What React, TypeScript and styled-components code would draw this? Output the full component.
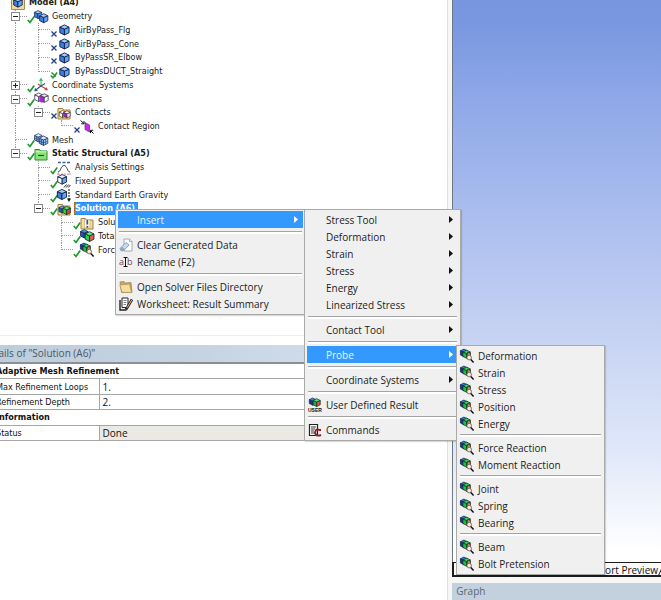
import React from "react";
import styled, { createGlobalStyle, css } from "styled-components";

const treeFont = '"DejaVu Sans Condensed", "DejaVu Sans", sans-serif';
const menuFont = '"Open Sans", "Noto Sans", sans-serif';

const GlobalStyle = createGlobalStyle`
  * { box-sizing: border-box; }
  body { margin: 0; background: #fff; overflow: hidden; }
  button { margin: 0; padding: 0; border: 0; background: none; color: inherit; font: inherit; text-align: left; }
  svg { display: block; flex: none; }
`;

/* ---------- icons ---------- */

const Glyph = styled.svg.attrs({ viewBox: "0 0 14 14", "aria-hidden": true })`
  width: 14px;
  height: 14px;
  overflow: visible;
`;

type CubeProps = { x?: number; y?: number; s?: number; left?: string; right?: string; top?: string; edge?: string };
const CubeShape = ({ x = 0, y = 0, s = 1, left = "#3d7fe0", right = "#5fa6f5", top = "#9fcbff", edge = "#12204a" }: CubeProps) => (
  <g transform={`translate(${x} ${y}) scale(${s})`} stroke={edge} strokeWidth={1} strokeLinejoin="round">
    <path d="M2 4 L7 6 V12.5 L2 10 Z" fill={left} />
    <path d="M12 4 L7 6 V12.5 L12 10 Z" fill={right} />
    <path d="M2 4 L7 1.5 L12 4 L7 6 Z" fill={top} />
  </g>
);

const Folder = ({ fill = "#f6dc9a", edge = "#9c8046" }: { fill?: string; edge?: string }) => (
  <path d="M1 2.5 H5.5 L6.5 4 H13 V13 H1 Z" fill={fill} stroke={edge} strokeWidth={1} />
);

const Loupe = () => (
  <g>
    <path d="M7.5 3.5 L10.5 4.5 V8 H7.5 Z" fill="#c98a74" stroke="#3a2620" strokeWidth="0.6" />
    <circle cx="9.2" cy="8.6" r="2.3" fill="#f7e6df" stroke="#6f625e" strokeWidth="0.9" />
    <path d="M10.8 10.4 L13.6 13.4" stroke="#111" strokeWidth="1.5" />
  </g>
);

const ModelIcon = () => (
  <Glyph>
    <path d="M0.5 0.5 H13.5 V13.5 H0.5 Z" fill="#f4d99d" stroke="#a58a55" />
    <CubeShape x={1} y={0.5} s={0.85} />
  </Glyph>
);
const GeometryIcon = () => (
  <Glyph>
    <CubeShape x={-1} y={-0.5} s={0.72} />
    <CubeShape x={4} y={2.5} s={0.82} />
  </Glyph>
);
const BodyIcon = () => (
  <Glyph>
    <CubeShape x={1} y={0.5} s={0.92} />
  </Glyph>
);
const AxesIcon = () => (
  <Glyph strokeWidth="1.1" fill="none">
    <path d="M7 8 V1 M5.5 3 L7 0.5 L8.5 3" stroke="#2fbf62" />
    <path d="M7 8 L13 11.5 M4 6 L7 8 M10.5 11.8 L13.2 11.7 L12 9.5" stroke="#c24848" />
    <path d="M7 8 L1 12.5 M7 8 L11 5.5 M1.5 10.3 L1 12.6 L3.5 12.5" stroke="#31508f" />
  </Glyph>
);
const ConnectionsIcon = () => (
  <Glyph>
    <CubeShape x={-0.8} y={-0.2} s={0.78} left="#fff" right="#d9d9e6" top="#fff" edge="#34344a" />
    <CubeShape x={4.8} y={0.6} s={0.78} left="#b321d6" right="#fff" top="#e7e7ef" edge="#34344a" />
    <path d="M5.5 4 L8.5 5 V11 L5.5 9.5 Z" fill="#b321d6" />
  </Glyph>
);
const ContactsIcon = () => (
  <Glyph>
    <Folder />
    <CubeShape x={1} y={3.6} s={0.65} left="#fff" right="#ddd" top="#fff" edge="#34242a" />
    <CubeShape x={5.4} y={3.8} s={0.65} left="#b321d6" right="#eee" top="#fff" edge="#34242a" />
  </Glyph>
);
const RegionIcon = () => (
  <Glyph>
    <path d="M5 2.5 L9.5 5 V12 L5 9.5 Z" fill="#c22de4" stroke="#6c1c8e" strokeWidth="0.7" />
    <path d="M0.5 0.5 L4 3.5 M4 1 V3.8 H1.2 M13.5 13.5 L10.5 10.5 M10.5 13 V10.3 H13.2" stroke="#111" fill="none" />
  </Glyph>
);
const MeshIcon = () => (
  <Glyph>
    <CubeShape x={-1} y={-0.5} s={0.75} left="#8cb9ef" right="#bcd9fb" top="#e4f1ff" edge="#27396b" />
    <CubeShape x={3.6} y={1.8} s={0.85} left="#6fa6ea" right="#a6cdf8" top="#dcecff" edge="#27396b" />
    <path d="M2.5 3.2 V8 M0.8 5 L4 6.5 M7.4 6.5 V11.6 M5.4 8 L9.6 10 M11.6 6.2 V11.4 M9.6 10 L13.6 8.2" stroke="#27396b" strokeWidth="0.6" />
  </Glyph>
);
const StructuralIcon = () => (
  <Glyph>
    <Folder fill="#8be279" edge="#258d2b" />
    <path d="M1.5 4.8 H12.5" stroke="#d6ffca" />
    <path d="M4 8.5 H10" stroke="#165c1c" strokeWidth="1.2" />
  </Glyph>
);
const SettingsIcon = () => (
  <Glyph fill="none">
    <path d="M1 1.5 H13" stroke="#3b5f9e" strokeWidth="1.6" strokeDasharray="3 1.5" />
    <path d="M1 11 C4 11 3.5 4.5 7 4.5 C10.5 4.5 10 11 13 11" stroke="#444" />
    <path d="M1 12 V14 M13 12 V14 M1 13.2 H13" stroke="#c87575" strokeWidth="0.8" strokeDasharray="2 1" />
  </Glyph>
);
const SupportIcon = () => (
  <Glyph>
    <CubeShape x={-1} y={-0.8} s={0.88} left="#fff" right="#67a9f2" top="#eef5ff" />
    <path d="M7 13.5 L9.5 10.5 M9.2 13.5 L11.7 10.5 M11.4 13.5 L13.4 11" stroke="#222" />
  </Glyph>
);
const GravityIcon = () => (
  <Glyph>
    <CubeShape x={-1.5} y={0} s={0.92} />
    <path d="M12 1 V12" stroke="#111" strokeDasharray="2 1" />
    <path d="M10 10.5 H14 L12 14 Z" fill="#111" />
  </Glyph>
);
const SolutionIcon = () => (
  <Glyph>
    <Folder />
    <CubeShape x={0.6} y={3} s={0.65} left="#1d63cf" right="#27c254" top="#57a6ff" />
    <CubeShape x={4.4} y={3.2} s={0.75} left="#21d44b" right="#dd4444" top="#58ea79" edge="#12301c" />
  </Glyph>
);
const InfoIcon = () => (
  <Glyph>
    <Folder />
    <path d="M4.5 3.5 H10 V12 H4.5 Z" fill="#fff6d8" stroke="#c7a75c" strokeWidth="0.6" />
    <path d="M7.3 4 V8.5 M7.3 10 V11.8" stroke="#2450c8" strokeWidth="1.7" />
  </Glyph>
);
const DeformationIcon = () => (
  <Glyph>
    <CubeShape x={-1} y={-0.5} s={0.75} left="#1d53c4" right="#2377d9" top="#3f93f5" />
    <CubeShape x={3.4} y={1.4} s={0.88} left="#20d548" right="#f25555" top="#62ef86" edge="#15321c" />
  </Glyph>
);
const ProbeIcon = () => (
  <Glyph>
    <CubeShape x={-1} y={-1} s={0.7} left="#16388f" right="#1f5dcc" top="#2f79e4" />
    <CubeShape x={1.4} y={0} s={0.74} left="#17c23d" right="#27e252" top="#2fd65b" edge="#14301d" />
    <Loupe />
  </Glyph>
);
const ClearIcon = () => (
  <Glyph>
    <path d="M5 1 H10.5 L13 3.5 V13 H5 Z" fill="#fff" stroke="#9aa3ad" strokeWidth="0.9" />
    <path d="M10.5 1 V3.5 H13" fill="#dfe6ec" stroke="#9aa3ad" strokeWidth="0.8" />
    <path d="M1 10.5 L7 4.5 L10 7 L4.5 12.8 H2 Z" fill="#c7dbea" stroke="#7590a8" strokeWidth="0.8" />
    <path d="M1 10.5 L3 8.7 L6 11.3 L4.5 12.8 H2 Z" fill="#8da9c0" />
  </Glyph>
);
const GlyphText = styled.text`
  font-family: ${menuFont};
  font-size: 9px;
`;
const SmallGlyphText = styled.text`
  font-family: "Liberation Sans", sans-serif;
  font-size: 5px;
  font-weight: 700;
`;
const RenameIcon = () => (
  <Glyph>
    <GlyphText x="0" y="10" fill="#6b4747">a</GlyphText>
    <GlyphText x="8" y="10" fill="#6b4747">b</GlyphText>
    <path d="M4.5 2.5 H8.5 M6.5 2.5 V11.5 M4.5 11.5 H8.5" stroke="#111" fill="none" />
  </Glyph>
);
const OpenFolderIcon = () => (
  <Glyph>
    <path d="M1 2 L5 1.5 L6.5 3 L12 2.5 L13 12.5 H2.5 Z" fill="#c9a95c" stroke="#a08651" strokeWidth="0.8" />
    <path d="M0.8 5 L10.5 4 L12.5 12.6 L3 12.3 Z" fill="#f3de9f" stroke="#b2965a" strokeWidth="0.8" />
  </Glyph>
);
const WorksheetIcon = () => (
  <Glyph>
    <path d="M3 1 H9 V10.5 H3 Z" fill="#fff" stroke="#222" />
    <path d="M1 3 V13 H7.5" fill="none" stroke="#222" strokeWidth="1.4" />
    <path d="M4.5 3.5 H7.5 M4.5 5.5 H7.5 M4.5 7.5 H7" stroke="#667" strokeWidth="0.8" />
    <path d="M13 2.5 L7 12.5" stroke="#3a2418" strokeWidth="2.6" />
    <path d="M12.7 3 L8 10.8" stroke="#e0b98a" strokeWidth="1" />
  </Glyph>
);
const UserIcon = () => (
  <Glyph>
    <CubeShape x={0} y={-1} s={0.66} left="#16388f" right="#1f5dcc" top="#3c82e4" />
    <CubeShape x={3.6} y={-0.4} s={0.72} left="#17b23d" right="#e24a4a" top="#4ce574" edge="#14301d" />
    <SmallGlyphText x="0" y="13.5" fill="#111">USER</SmallGlyphText>
  </Glyph>
);
const CommandsIcon = () => (
  <Glyph fill="none">
    <path d="M1.5 1.5 H9.5 V12.5 H1.5 Z" fill="#fff" stroke="#222" strokeWidth="1.2" />
    <path d="M3 4 H8 M3 6 H7 M3 8 H6 M3 10 H7" stroke="#333" />
    <path d="M13 7 H11.5 C8 5.5 6.5 8 7.5 11 C8.5 13 11 12.8 13 12" stroke="#8a1f2b" strokeWidth="1.9" />
  </Glyph>
);

const MarkGlyph = styled.svg.attrs({ viewBox: "0 0 8 8", "aria-hidden": true })`
  width: 8px;
  height: 8px;
  margin-top: 5px;
  overflow: visible;
`;
const TickIcon = () => (
  <MarkGlyph>
    <path d="M0.8 5 L3 7.5 L7.2 1.5" fill="none" stroke="#1c9a2c" strokeWidth="1.7" />
  </MarkGlyph>
);
const CrossIcon = () => (
  <MarkGlyph>
    <path d="M1.5 2.5 L6.5 7.5 M6.5 2.5 L1.5 7.5" fill="none" stroke="#25408a" strokeWidth="1.3" />
  </MarkGlyph>
);
const CrossTickIcon = () => (
  <MarkGlyph>
    <path d="M1.5 2.5 L6 6.5 M0.8 5.5 L3 7.8 L7.2 2.5" fill="none" stroke="#1c9a2c" strokeWidth="1.5" />
  </MarkGlyph>
);

/* ---------- page frame ---------- */

const Page = styled.main`
  position: relative;
  display: grid;
  grid-template-columns: 13fr 6fr;
  height: 100vh;
  overflow: hidden;
  background: #f6f6f4;
`;
const LeftColumn = styled.div`
  display: flex;
  flex-direction: column;
  min-width: 0;
  margin-right: 4px;
  border-right: 1px solid #e0e0e0;
  background: #fff;
`;
const RightColumn = styled.div`
  display: flex;
  flex-direction: column;
  min-width: 0;
`;

/* ---------- outline tree ---------- */

const TreePane = styled.section`
  height: 340px;
  padding-left: 4px;
  margin-top: -4px;
  border-bottom: 1px solid #ececec;
  font-family: ${treeFont};
  font-size: 9px;
  color: #1a1a1a;
`;
const TreeList = styled.div`
  display: grid;
  grid-auto-rows: 1fr;
  height: 261px;
`;
const TreeRow = styled.div`
  display: flex;
  align-items: stretch;
  min-height: 0;
  white-space: nowrap;
`;
type GuideKind = "none" | "line" | "tee" | "end";
const dotted = "1px dotted #9a9a9a";
const GuideCell = styled.span<{ $kind: GuideKind }>`
  display: grid;
  flex: none;
  width: 23px;
  grid-template: 1fr 1fr / 11px 12px;
  &::before {
    content: "";
    grid-area: 1 / 2;
    border-left: ${(p) => (p.$kind === "none" ? 0 : dotted)};
    border-bottom: ${(p) => (p.$kind === "tee" || p.$kind === "end" ? dotted : 0)};
  }
  &::after {
    content: "";
    grid-area: 2 / 2;
    border-left: ${(p) => (p.$kind === "line" || p.$kind === "tee" ? dotted : 0)};
  }
`;
const Toggle = styled.button`
  z-index: 1;
  grid-area: 1 / 1 / 3 / 3;
  align-self: center;
  display: grid;
  place-items: center;
  width: 9px;
  height: 9px;
  margin-left: 7px;
  border: 1px solid #8a8a8a;
  background: #fff;
  color: #222;
`;
const ToggleSign = styled.svg`
  width: 5px;
  height: 5px;
`;
const NodeParts = styled.span`
  display: flex;
  align-items: center;
`;
const NodeIcon = styled.span`
  margin-left: -1px;
`;
const NodeLabel = styled.span<{ $bold?: boolean; $selected?: boolean }>`
  margin-left: 3px;
  padding: 0 3px 0 1px;
  line-height: 13px;
  font-weight: ${(p) => (p.$bold ? 700 : 400)};
  ${(p) =>
    p.$selected &&
    css`
      background: #3399ff;
      color: #fff;
      outline: 1px dotted #a35f1d;
      outline-offset: -1px;
    `}
`;

type NodeData = {
  label: string;
  icon: React.ReactNode;
  guides: GuideKind[];
  mark?: "tick" | "cross" | "both";
  toggle?: "open" | "closed";
  bold?: boolean;
  selected?: boolean;
};

const nodes: NodeData[] = [
  { label: "Model (A4)", icon: <ModelIcon />, guides: [], bold: true },
  { label: "Geometry", icon: <GeometryIcon />, guides: ["tee"], mark: "tick", toggle: "open" },
  { label: "AirByPass_Flg", icon: <BodyIcon />, guides: ["line", "tee"], mark: "cross" },
  { label: "AirByPass_Cone", icon: <BodyIcon />, guides: ["line", "tee"], mark: "cross" },
  { label: "ByPassSR_Elbow", icon: <BodyIcon />, guides: ["line", "tee"], mark: "cross" },
  { label: "ByPassDUCT_Straight", icon: <BodyIcon />, guides: ["line", "end"], mark: "both" },
  { label: "Coordinate Systems", icon: <AxesIcon />, guides: ["tee"], mark: "tick", toggle: "closed" },
  { label: "Connections", icon: <ConnectionsIcon />, guides: ["tee"], mark: "tick", toggle: "open" },
  { label: "Contacts", icon: <ContactsIcon />, guides: ["line", "end"], mark: "cross", toggle: "open" },
  { label: "Contact Region", icon: <RegionIcon />, guides: ["line", "none", "end"], mark: "cross" },
  { label: "Mesh", icon: <MeshIcon />, guides: ["tee"], mark: "tick" },
  { label: "Static Structural (A5)", icon: <StructuralIcon />, guides: ["end"], mark: "tick", toggle: "open", bold: true },
  { label: "Analysis Settings", icon: <SettingsIcon />, guides: ["none", "tee"], mark: "tick" },
  { label: "Fixed Support", icon: <SupportIcon />, guides: ["none", "tee"], mark: "tick" },
  { label: "Standard Earth Gravity", icon: <GravityIcon />, guides: ["none", "tee"], mark: "tick" },
  { label: "Solution (A6)", icon: <SolutionIcon />, guides: ["none", "end"], mark: "tick", toggle: "open", bold: true, selected: true },
  { label: "Solution Information", icon: <InfoIcon />, guides: ["none", "none", "tee"], mark: "tick" },
  { label: "Total Deformation", icon: <DeformationIcon />, guides: ["none", "none", "tee"], mark: "tick" },
  { label: "Force Reaction", icon: <ProbeIcon />, guides: ["none", "none", "end"], mark: "tick" },
];

const NodeMark = ({ mark }: { mark?: NodeData["mark"] }) =>
  mark === "cross" ? <CrossIcon /> : mark === "both" ? <CrossTickIcon /> : mark === "tick" ? <TickIcon /> : <MarkGlyph />;

const OutlineNode = ({ node }: { node: NodeData }) => (
  <TreeRow role="treeitem" aria-level={node.guides.length + 1} aria-selected={!!node.selected}>
    {node.guides.map((kind, i) => (
      <GuideCell key={i} $kind={kind}>
        {node.toggle && i === node.guides.length - 1 && (
          <Toggle type="button" aria-label={`Toggle ${node.label}`} aria-expanded={node.toggle === "open"}>
            <ToggleSign viewBox="0 0 5 5" aria-hidden>
              <path d={node.toggle === "open" ? "M0 2.5 H5" : "M0 2.5 H5 M2.5 0 V5"} stroke="#222" />
            </ToggleSign>
          </Toggle>
        )}
      </GuideCell>
    ))}
    <NodeParts>
      <NodeMark mark={node.mark} />
      <NodeIcon>{node.icon}</NodeIcon>
      <NodeLabel $bold={node.bold} $selected={node.selected}>
        {node.label}
      </NodeLabel>
    </NodeParts>
  </TreeRow>
);

/* ---------- details ---------- */

const DetailsPane = styled.section`
  margin-top: 9px;
  font-family: ${menuFont};
  font-size: 10px;
  overflow: hidden;
`;
const DetailsTitle = styled.h2`
  margin: 0;
  padding-bottom: 1px;
  border-bottom: 2px solid #8d8f96;
  background: linear-gradient(90deg, #bccddb, #c6d4e2 45%, #dae4f3);
  color: #4d5763;
  font-size: 10px;
  font-weight: 400;
  line-height: 16px;
  text-indent: -18px;
`;
const DetailsTable = styled.table`
  width: 100%;
  height: 77px;
  border-collapse: collapse;
  table-layout: fixed;
  color: #111;
  font-family: ${treeFont};
  font-size: 9px;
  line-height: 14px;
`;
const NameColumn = styled.col`
  width: 99px;
`;
const GroupCell = styled.th`
  padding: 0;
  border-bottom: 1px solid #a6a6a6;
  text-align: left;
  text-indent: -4px;
  font-weight: 700;
`;
const NameCell = styled.th`
  padding: 0;
  border-right: 1px solid #a6a6a6;
  border-bottom: 1px solid #a6a6a6;
  text-align: left;
  text-indent: -4px;
  font-weight: 400;
  white-space: nowrap;
`;
const ValueCell = styled.td<{ $readOnly?: boolean }>`
  padding: 0 3px;
  border-bottom: 1px solid #a6a6a6;
  background: ${(p) => (p.$readOnly ? "#ebe9e3" : "#fff")};
  font-family: ${menuFont};
  font-size: 10px;
`;

/* ---------- graphics view ---------- */

const Canvas = styled.section`
  flex: 1;
  border-left: 1px solid #6f7684;
  background: linear-gradient(180deg, #7896e0 0%, #7997e0 4%, #8fa8e8 18%, #aabdee 38%, #c8d4f3 61%, #dfe7f9 80%, #fff 98%);
`;
const TabStrip = styled.nav`
  display: flex;
  align-items: stretch;
  height: 15px;
  padding-left: 2px;
  border: 1px solid #1c1c1c;
  border-width: 1px 0 2px 2px;
  background: #fafafa;
  font-family: ${menuFont};
  font-size: 10px;
  color: #111;
`;
const ViewTab = styled.button`
  position: relative;
  margin-left: 6px;
  padding: 0 1px;
  line-height: 14px;
  white-space: nowrap;
  &::after {
    content: "";
    position: absolute;
    top: 0;
    right: -3px;
    height: 12px;
    border-right: 1px solid #1c1c1c;
    transform: skewX(-25deg);
  }
`;
const GraphTitle = styled.h2`
  margin: 6px 0 0;
  padding-left: 4px;
  background: #c3d1de;
  color: #5a6775;
  font-family: ${menuFont};
  font-size: 10px;
  font-weight: 400;
  line-height: 17px;
`;

/* ---------- menus ---------- */

const MenuPanel = styled.div<{ $left: number; $top: number; $width: number }>`
  position: absolute;
  left: ${(p) => p.$left}px;
  top: ${(p) => p.$top}px;
  width: ${(p) => p.$width}px;
  padding: 1px 2px 2px;
  border: 1px solid #a9a9a5;
  background: #f0f0f0;
  font-family: ${menuFont};
  font-size: 10px;
  color: #1c1c1c;
  box-shadow: 1px 1px 1px rgba(0, 0, 0, 0.15);
`;
const MenuItem = styled.button<{ $active?: boolean }>`
  display: flex;
  align-items: center;
  gap: 4px;
  width: 100%;
  height: 17px;
  padding: 0 5px 0 1px;
  white-space: nowrap;
  background: ${(p) => (p.$active ? "#3399ff" : "transparent")};
  color: ${(p) => (p.$active ? "#e8f4ff" : "inherit")};
`;
const IconSlot = styled.span`
  flex: none;
  width: 14px;
`;
const ItemText = styled.span`
  flex: 1;
`;
const Arrow = styled.svg`
  width: 4px;
  height: 7px;
`;
const MenuRule = styled.div<{ $tight?: boolean }>`
  display: flex;
  align-items: center;
  height: ${(p) => (p.$tight ? 7 : 8)}px;
  padding: 0 1px;
  &::before {
    content: "";
    flex: 1;
    height: 2px;
    border-top: 1px solid #a4a4a4;
    background: #fff;
  }
`;

type Entry = { text: string; icon?: React.ReactNode; sub?: boolean; active?: boolean };
type MenuProps = { label: string; left: number; top: number; width: number; tight?: boolean; groups: Entry[][] };

const Menu = ({ label, left, top, width, tight, groups }: MenuProps) => (
  <MenuPanel role="menu" aria-label={label} $left={left} $top={top} $width={width}>
    {groups.map((group, g) => (
      <React.Fragment key={g}>
        {g > 0 && <MenuRule role="separator" $tight={tight} />}
        {group.map((entry) => (
          <MenuItem key={entry.text} type="button" role="menuitem" aria-haspopup={entry.sub ? "menu" : undefined} $active={entry.active}>
            <IconSlot>{entry.icon}</IconSlot>
            <ItemText>{entry.text}</ItemText>
            {entry.sub && (
              <Arrow viewBox="0 0 4 7" aria-hidden>
                <path d="M0 0 L4 3.5 L0 7 Z" fill={entry.active ? "#fff" : "#111"} />
              </Arrow>
            )}
          </MenuItem>
        ))}
      </React.Fragment>
    ))}
  </MenuPanel>
);

const contextGroups: Entry[][] = [
  [{ text: "Insert", sub: true, active: true }],
  [
    { text: "Clear Generated Data", icon: <ClearIcon /> },
    { text: "Rename (F2)", icon: <RenameIcon /> },
  ],
  [
    { text: "Open Solver Files Directory", icon: <OpenFolderIcon /> },
    { text: "Worksheet: Result Summary", icon: <WorksheetIcon /> },
  ],
];
const insertGroups: Entry[][] = [
  ["Stress Tool", "Deformation", "Strain", "Stress", "Energy", "Linearized Stress"].map((text) => ({ text, sub: true })),
  [{ text: "Contact Tool", sub: true }],
  [{ text: "Probe", sub: true, active: true }],
  [{ text: "Coordinate Systems", sub: true }],
  [{ text: "User Defined Result", icon: <UserIcon /> }],
  [{ text: "Commands", icon: <CommandsIcon /> }],
];
const probeGroups: Entry[][] = [
  ["Deformation", "Strain", "Stress", "Position", "Energy"],
  ["Force Reaction", "Moment Reaction"],
  ["Joint", "Spring", "Bearing"],
  ["Beam", "Bolt Pretension"],
].map((group) => group.map((text) => ({ text, icon: <ProbeIcon /> })));

export default function App() {
  return (
    <Page>
      <GlobalStyle />
      <LeftColumn>
        <TreePane>
          <TreeList role="tree" aria-label="Outline">
            {nodes.map((node) => (
              <OutlineNode key={node.label} node={node} />
            ))}
          </TreeList>
        </TreePane>
        <DetailsPane>
          <DetailsTitle>Details of "Solution (A6)"</DetailsTitle>
          <DetailsTable>
            <colgroup>
              <NameColumn />
              <col />
            </colgroup>
            <tbody>
              <tr>
                <GroupCell colSpan={2}>Adaptive Mesh Refinement</GroupCell>
              </tr>
              <tr>
                <NameCell scope="row">Max Refinement Loops</NameCell>
                <ValueCell>1.</ValueCell>
              </tr>
              <tr>
                <NameCell scope="row">Refinement Depth</NameCell>
                <ValueCell>2.</ValueCell>
              </tr>
              <tr>
                <GroupCell colSpan={2}>Information</GroupCell>
              </tr>
              <tr>
                <NameCell scope="row">Status</NameCell>
                <ValueCell $readOnly>Done</ValueCell>
              </tr>
            </tbody>
          </DetailsTable>
        </DetailsPane>
      </LeftColumn>
      <RightColumn>
        <Canvas aria-label="Graphics" />
        <TabStrip aria-label="Views">
          <ViewTab type="button">Geometry</ViewTab>
          <ViewTab type="button">Print Preview</ViewTab>
          <ViewTab type="button">Report Preview</ViewTab>
        </TabStrip>
        <GraphTitle>Graph</GraphTitle>
      </RightColumn>
      <Menu label="Solution" left={115} top={209} width={191} groups={contextGroups} />
      <Menu label="Insert" left={304} top={209} width={157} groups={insertGroups} />
      <Menu label="Probe" left={456} top={345} width={149} tight groups={probeGroups} />
    </Page>
  );
}
